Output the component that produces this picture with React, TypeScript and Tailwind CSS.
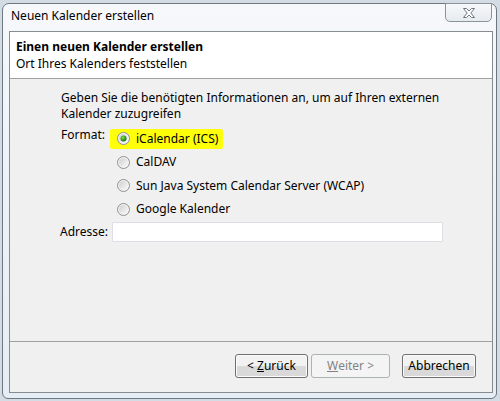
import React from "react";

function Radio({ checked }: { checked?: boolean }) {
  return (
    <svg width="13" height="13" viewBox="0 0 13 13" className="shrink-0">
      <defs>
        <linearGradient id={checked ? "rgc" : "rg"} x1="0" y1="0" x2="1" y2="1">
          <stop offset="0" stopColor="#cfcfcf" />
          <stop offset="1" stopColor="#fbfbfb" />
        </linearGradient>
        <radialGradient id="dot" cx="0.4" cy="0.35" r="0.7">
          <stop offset="0" stopColor="#8fe050" />
          <stop offset="0.6" stopColor="#2f9a18" />
          <stop offset="1" stopColor="#1c5e10" />
        </radialGradient>
      </defs>
      <circle cx="6.5" cy="6.5" r="6" fill="#f4f4f4" stroke="#8e8f8f" strokeWidth="1" />
      <circle cx="6.5" cy="6.5" r="4.6" fill={`url(#${checked ? "rgc" : "rg"})`} />
      {checked && <circle cx="6.5" cy="6.5" r="3" fill="url(#dot)" />}
    </svg>
  );
}

function Button({
  children,
  disabled,
  className,
}: {
  children: React.ReactNode;
  disabled?: boolean;
  className?: string;
}) {
  return (
    <div
      className={
        "h-[24px] rounded-[3px] border flex items-center justify-center text-[12px] " +
        (disabled
          ? "border-[#adb2b5] bg-[#f4f4f4] text-[#838383] "
          : "border-[#707070] bg-gradient-to-b from-[#f2f2f2] from-50% to-[#d9d9d9] to-50% text-black shadow-[inset_0_0_0_1px_#fbfbfb] ") +
        (className ?? "")
      }
    >
      {children}
    </div>
  );
}

export default function App() {
  const options = [
    "CalDAV",
    "Sun Java System Calendar Server (WCAP)",
    "Google Kalender",
  ];
  return (
    <div className="w-[500px] h-[401px] overflow-hidden bg-[#d3dbe4] pl-[2px] pt-[3px] font-['Noto_Sans',sans-serif] text-[12px] text-black">
      <div className="w-[495px] h-[396px] flex flex-col rounded-t-[7px] rounded-b-[6px] border border-[#6f7780] bg-gradient-to-b from-[#f6f8fb] via-[#edf2f7] to-[#e6edf4]">
        {/* title bar */}
        <div className="h-[27px] flex items-start justify-between shrink-0">
          <div className="ml-[8px] mt-[4px] leading-[16px]">Neuen Kalender erstellen</div>
          <div className="-mt-px mr-[4px] w-[47px] h-[19px] rounded-b-[5px] border border-[#8a939c] bg-gradient-to-b from-[#f6f8fa] to-[#e6ebf0] flex items-center justify-center">
            <svg width="12" height="10" viewBox="0 0 12 10">
              <path
                d="M0.5 0.5 H3.5 L6 3 L8.5 0.5 H11.5 L7.8 5 L11.5 9.5 H8.5 L6 7 L3.5 9.5 H0.5 L4.2 5 Z"
                fill="#ffffff"
                stroke="#6e7780"
                strokeWidth="1"
                strokeLinejoin="round"
              />
            </svg>
          </div>
        </div>
        {/* client */}
        <div className="flex-1 ml-[6px] mr-[3px] mb-[5px] border border-[#878c91] flex flex-col bg-[#f0f0f0]">
          <div className="h-[47px] bg-white border-b border-[#a0a0a0] pt-[6px] pl-[6px] shrink-0">
            <div className="font-bold leading-[17px]">Einen neuen Kalender erstellen</div>
            <div className="leading-[17px]">Ort Ihres Kalenders feststellen</div>
          </div>
          <div className="flex-1 pl-[51px] pt-[11px]">
            <div className="leading-[16px] w-[400px]">
              Geben Sie die benötigten Informationen an, um auf Ihren externen Kalender zuzugreifen
            </div>
            <div className="flex mt-[3px]">
              <div className="w-[56px] leading-[16px] pt-[2px]">Format:</div>
              <div className="flex flex-col pt-[2px]">
                <div className="h-[23.5px] flex items-center">
                  <div className="-ml-[7px] pl-[7px] pr-[5px] h-[20px] flex items-center gap-[6px] bg-[#ffff0a] rounded-[2px]">
                    <Radio checked />
                    <span className="leading-[16px]">iCalendar (ICS)</span>
                  </div>
                </div>
                {options.map((o) => (
                  <div key={o} className="h-[23.5px] flex items-center gap-[6px]">
                    <Radio />
                    <span className="leading-[16px]">{o}</span>
                  </div>
                ))}
              </div>
            </div>
            <div className="flex items-center mt-[1px]">
              <div className="w-[52px] -ml-px">Adresse:</div>
              <div className="w-[331px] h-[20px] bg-white border border-[#dcdfe3] rounded-[1px]" />
            </div>
          </div>
          <div className="h-[51px] border-t border-[#a0a0a0] flex items-start justify-end pt-[12px] pr-[16px] shrink-0">
            <Button className="w-[73px]">
              &lt;&nbsp;<span className="underline">Z</span>urück
            </Button>
            <Button disabled className="w-[79px] ml-[3px]">
              <span className="underline">W</span>eiter &gt;
            </Button>
            <Button className="w-[74px] ml-[12px]">Abbrechen</Button>
          </div>
        </div>
      </div>
    </div>
  );
}
